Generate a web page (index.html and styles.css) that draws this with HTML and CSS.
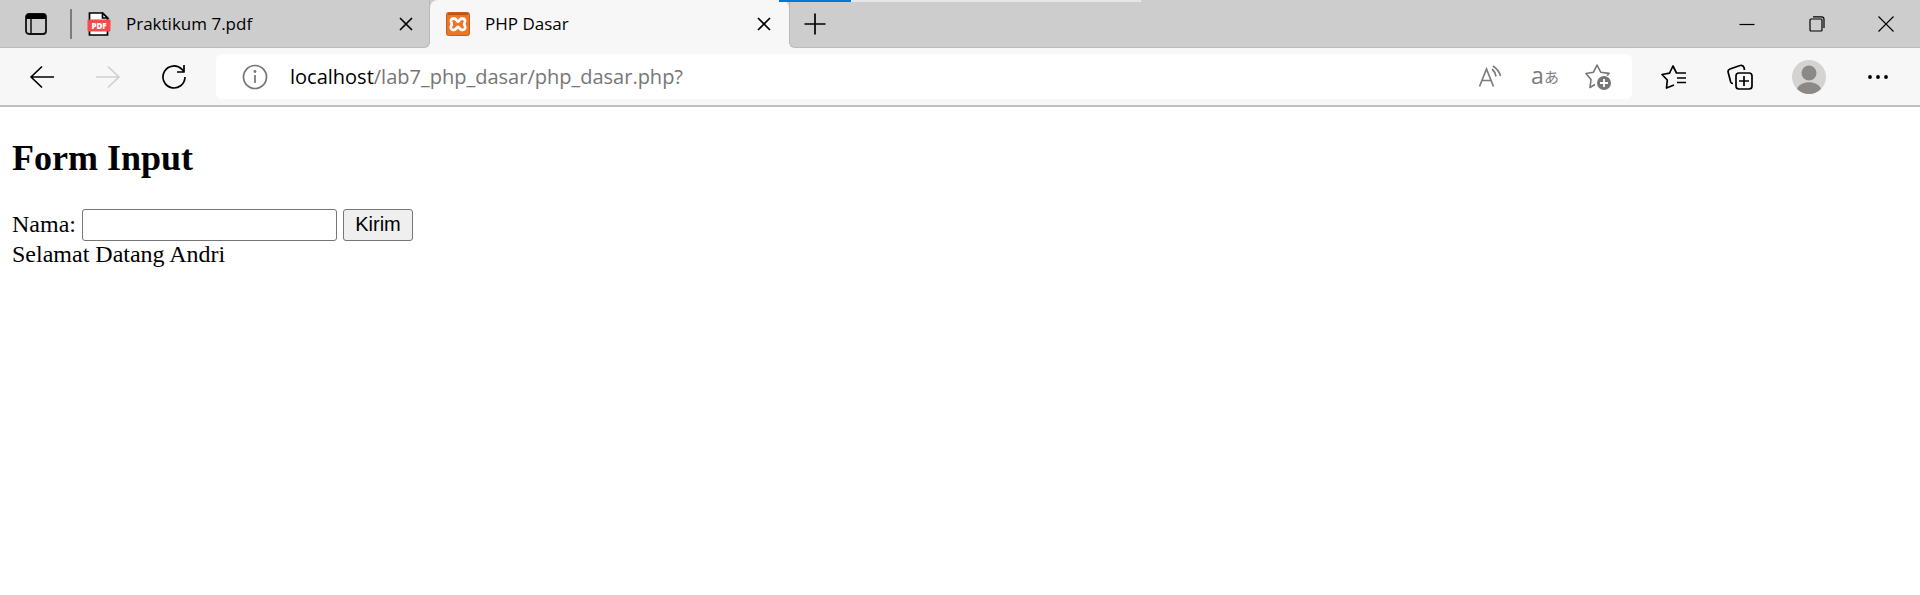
FILE: index.html
```html
<!DOCTYPE html>
<html lang="id">
<head>
<meta charset="utf-8">
<title>PHP Dasar</title>
<link rel="stylesheet" href="styles.css">
</head>
<body>
<header class="browser">
  <div class="strip">
    <div class="strip-left">
      <button class="tab-actions" aria-label="Tab actions">
        <svg width="22" height="22" viewBox="0 0 22 22"><rect x="1" y="1" width="20" height="20" rx="3" fill="none" stroke="#111" stroke-width="1.800"/><path d="M1 6V4a3 3 0 0 1 3-3h14a3 3 0 0 1 3 3v2z" fill="#000"/><path d="M6 6v15" stroke="#111" stroke-width="1.500"/></svg>
      </button>
      <div class="tab">
        <svg class="favicon" width="24" height="24" viewBox="0 0 24 24"><path d="M2.500 1h13l5 5v17h-18z" fill="#fff" stroke="#000" stroke-width="1.700"/><path d="M15.500 1v5h5z" fill="#fff" stroke="#000" stroke-width="1.700"/><rect x="0.500" y="7.500" width="23" height="12" rx="1" fill="#f24a4d"/><text x="12" y="16.500" text-anchor="middle" class="pdf">PDF</text></svg>
        <span class="tab-title">Praktikum 7.pdf</span>
        <button class="tab-close" aria-label="Close tab"><svg width="14" height="14" viewBox="0 0 14 14"><path d="M1 1l12 12M13 1L1 13" class="line"/></svg></button>
      </div>
    </div>
    <div class="active-slot">
      <div class="tab tab-active">
        <svg class="favicon" width="24" height="24" viewBox="0 0 24 24"><rect x=".5" y=".5" width="23" height="23" rx="2" fill="#ed7526" stroke="#c8601c"/><path d="M2 2h20" stroke="#b9541a" stroke-width="2"/><path d="M12 9.500C10.500 9.500 10.500 6.500 8 6.500C5 6.500 4 9 5.500 11C6.300 12.200 6 12.500 5.300 13.500C4 16 5 18 7.700 18C10.500 18 10.500 15 12 15C13.500 15 13.500 18 16.300 18C19 18 20 16 18.700 13.500C18 12.500 17.700 12.200 18.500 11C20 9 19 6.500 16 6.500C13.500 6.500 13.500 9.500 12 9.500z" fill="none" stroke="#fff" stroke-width="2.800" stroke-linejoin="round"/></svg>
        <span class="tab-title">PHP Dasar</span>
        <button class="tab-close" aria-label="Close tab"><svg width="14" height="14" viewBox="0 0 14 14"><path d="M1 1l12 12M13 1L1 13" class="line"/></svg></button>
      </div>
    </div>
    <div class="strip-right">
      <button class="new-tab" aria-label="New tab"><svg width="22" height="22" viewBox="0 0 22 22"><path d="M11 .5v21M.5 11h21" class="line"/></svg></button>
      <div class="window-controls">
        <button aria-label="Minimize"><svg width="16" height="16" viewBox="0 0 16 16"><path d="M.5 8.500h15" class="thin"/></svg></button>
        <button aria-label="Restore"><svg width="16" height="16" viewBox="0 0 16 16"><rect x="1" y="3" width="12" height="12" rx="1" class="thin"/><path d="M4 .8h8.500a2.500 2.500 0 0 1 2.500 2.500V12" class="thin"/></svg></button>
        <button class="window-close" aria-label="Close"><svg width="16" height="16" viewBox="0 0 16 16"><path d="M.5.5l15 15M15.500.5l-15 15" class="thin"/></svg></button>
      </div>
    </div>
    <div class="progress"><span class="progress-done"></span></div>
  </div>

  <div class="toolbar">
    <button class="tool" aria-label="Back"><svg width="24" height="24" viewBox="0 0 24 24"><path d="M24 12H1M12 1.500L1 12l11 10.500" class="line"/></svg></button>
    <button class="tool disabled" aria-label="Forward"><svg width="24" height="24" viewBox="0 0 24 24"><path d="M0 12h23M12 1.500L23 12 12 22.500" class="line"/></svg></button>
    <button class="tool" aria-label="Refresh"><svg width="24" height="26" viewBox="0 0 24 26"><path d="M23 13A11 11 0 1 1 19.800 5.200L22 7.500M22 1v7h-7" class="line"/></svg></button>
    <div class="address">
      <button class="site-info" aria-label="Site information"><svg width="26" height="26" viewBox="0 0 26 26" fill="none" stroke="#757575" stroke-width="1.700"><circle cx="13" cy="13" r="11.500"/><path d="M13 11v8"/><circle cx="13" cy="7.500" r=".6" fill="#757575"/></svg></button>
      <p class="url"><span class="host">localhost</span>/lab7_php_dasar/php_dasar.php?</p>
      <button class="action" aria-label="Read aloud"><svg width="24" height="24" viewBox="0 0 24 24" fill="none" stroke="#7c7c7c" stroke-width="1.700"><path d="M1.500 21.500L8.500 4l7 17.500M4 15.500h9M14 4Q17 6.500 18 11.500M15 1Q21 5 22.500 11"/></svg></button>
      <button class="action translate" aria-label="Translate"><span class="latin">a</span><span class="kana">あ</span></button>
      <button class="action" aria-label="Add to favorites"><svg width="26" height="26" viewBox="0 0 26 26"><path d="M10 20.500L5 23.500l1-8L1 9.500l7.500-1.300L12 1l3.700 7.200 8.300 1.200-2 2.100" fill="none" stroke="#767676" stroke-width="1.600" stroke-linejoin="round"/><circle cx="19" cy="19" r="7" fill="#767676"/><path d="M19 15v8M15 19h8" stroke="#fff" stroke-width="1.800"/></svg></button>
    </div>
    <button class="tool" aria-label="Favorites"><svg width="26" height="24" viewBox="0 0 26 24"><path d="M13 20l-7.500 3 .8-8L1 9.500l7.500-1.300L12 1l3.500 7H25M16 13h9M16 17.500h9" class="line"/></svg></button>
    <button class="tool" aria-label="Collections"><svg width="26" height="26" viewBox="0 0 26 26"><rect x="9" y="9" width="16" height="16" rx="3" class="line"/><path d="M17 12v10M12 17h10M6 19.500c-1 0-2-.5-2.300-1.500L1.200 8.500C.8 7 1.500 5.500 3 5L13 1.500c2-.5 3.500.3 4 2L17.500 6" class="line"/></svg></button>
    <button class="tool profile" aria-label="Profile"><svg width="34" height="34" viewBox="0 0 34 34"><circle cx="17" cy="17" r="17" fill="#d5d3d1"/><circle cx="17" cy="13" r="7.500" fill="#8b8886"/><path d="M5 29C8 20 26 20 29 29A17 17 0 0 1 5 29z" fill="#8b8886"/></svg></button>
    <button class="tool" aria-label="Settings and more"><svg width="20" height="4" viewBox="0 0 20 4"><circle cx="2" cy="2" r="1.900"/><circle cx="10" cy="2" r="1.900"/><circle cx="18" cy="2" r="1.900"/></svg></button>
  </div>
</header>

<main class="page">
  <h2>Form Input</h2>
  <form class="name-form">
    <label for="nama">Nama:</label>
    <input id="nama" class="name-input" type="text" name="nama">
    <button class="send" type="button">Kirim</button>
  </form>
  <p class="welcome">Selamat Datang Andri</p>
</main>
</body>
</html>
```
FILE: styles.css
```css
* {
  box-sizing: border-box;
}

body {
  margin: 0;
  background: #fff;
  color: #000;
  font-family: "Liberation Serif", "Times New Roman", serif;
  font-size: 24px;
}

svg {
  display: block;
  flex: none;
}

.browser {
  font-family: "Open Sans", "Noto Sans", sans-serif;
}

.browser button {
  display: flex;
  align-items: center;
  justify-content: center;
  padding: 0;
  border: 0;
  background: none;
  flex: none;
}

.line {
  fill: none;
  stroke: #000;
  stroke-width: 1.7;
  stroke-linejoin: round;
}

.thin {
  fill: none;
  stroke: #000;
  stroke-width: 1.2;
}

/* Tab strip */
.strip {
  position: relative;
  display: flex;
  height: 48px;
  background: #f7f7f7;
}

.strip-left,
.strip-right {
  display: flex;
  align-items: center;
  background: #cdcdcd;
  border-bottom: 1px solid #bababa;
}

.strip-left {
  border-right: 1px solid #bababa;
  border-bottom-right-radius: 6px;
}

.strip-right {
  flex: 1;
  border-left: 1px solid #bababa;
  border-bottom-left-radius: 6px;
}

.browser .tab-actions {
  width: 72px;
  height: 30px;
  padding-left: 2px;
  border-right: 2px solid #7c7c7c;
}

.tab {
  display: flex;
  align-items: center;
  width: 359px;
  height: 48px;
  padding: 0 18px 0 16px;
}

.active-slot {
  background: linear-gradient(#cdcdcd 50%, #f7f7f7 50%);
}

.tab-active {
  background: #f7f7f7;
  border-radius: 8px 8px 0 0;
}

.strip-left .tab {
  width: 357px;
  padding: 0 16px 0 15px;
}

.tab-title {
  flex: 1;
  padding-left: 15px;
  font-size: 17px;
  line-height: 24px;
}

.pdf {
  fill: #fff;
  font-size: 8px;
  font-weight: 800;
}

.browser .new-tab {
  width: 50px;
  height: 46px;
}

.window-controls {
  display: flex;
  margin-left: auto;
}

.window-controls button {
  width: 70px;
  height: 46px;
}

.window-controls .window-close {
  width: 68px;
}

.progress {
  position: absolute;
  top: 0;
  left: 779px;
  width: 362px;
  height: 2px;
  background: #e6e6e6;
}

.progress-done {
  display: block;
  width: 72px;
  height: 2px;
  background: #0078d7;
}

/* Toolbar */
.toolbar {
  display: flex;
  align-items: center;
  height: 59px;
  padding: 0 9px;
  background: #f7f7f7;
  border-bottom: 2px solid #bebebe;
}

.tool {
  width: 66px;
  height: 45px;
}

.browser .profile {
  width: 72px;
}

.disabled .line {
  stroke: #cfcfcf;
}

.address {
  display: flex;
  flex: 1;
  align-items: center;
  height: 45px;
  margin: 0 9px;
  padding: 0 7px;
  background: #fff;
  border-radius: 6px;
}

.site-info {
  width: 64px;
  height: 40px;
}

.url {
  flex: 1;
  margin: 0 0 0 3px;
  color: #767676;
  font-size: 20px;
  line-height: 28px;
}

.host {
  color: #000;
}

.action {
  width: 54px;
  height: 40px;
}

.browser .translate {
  padding: 0 0 3px 2px;
  color: #7c7c7c;
  line-height: 24px;
}

.latin {
  font-family: "Open Sans", sans-serif;
  font-size: 23px;
}

.kana {
  padding-top: 4px;
  font-family: "Noto Sans CJK JP", sans-serif;
  font-size: 15px;
}

/* Page content */
.page {
  padding: 31px 12px;
}

h2 {
  margin: 0 0 30px;
  font-size: 36px;
  line-height: 41px;
}

.name-form {
  display: flex;
  align-items: center;
  gap: 6px;
}

.name-form label {
  padding-bottom: 2px;
}

.name-input {
  width: 255px;
  height: 32px;
  border: 1px solid #767676;
  border-radius: 3px;
  font: 20px "Liberation Sans", Arial, sans-serif;
}

.send {
  width: 70px;
  height: 32px;
  padding: 0 0 2px;
  border: 1px solid #767676;
  border-radius: 3px;
  background: #efefef;
  color: #000;
  font: 20px "Liberation Sans", Arial, sans-serif;
}

.welcome {
  margin: 0;
  line-height: 26px;
}
```
